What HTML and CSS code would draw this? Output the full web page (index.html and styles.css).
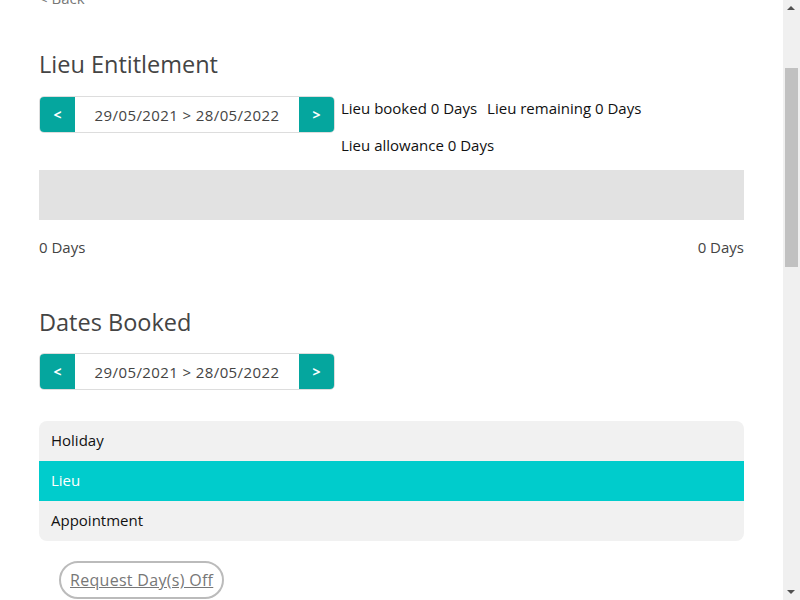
FILE: index.html
```html
<!DOCTYPE html>
<html lang="en">
<head>
<meta charset="utf-8">
<title>Lieu Entitlement</title>
<link rel="stylesheet" href="styles.css">
</head>
<body>
<div class="page">
  <a class="back" href="#">&lt; Back</a>

  <section class="entitlement">
    <h2 class="title">Lieu Entitlement</h2>
    <div class="picker-row">
      <div class="picker">
        <button class="nav">&lt;</button>
        <span class="range">29/05/2021 &gt; 28/05/2022</span>
        <button class="nav">&gt;</button>
      </div>
      <div class="stats">
        <span class="stat">Lieu booked 0 Days</span>
        <span class="stat">Lieu remaining 0 Days</span>
        <span class="stat">Lieu allowance 0 Days</span>
      </div>
    </div>
    <div class="bar"></div>
    <div class="scale"><span>0 Days</span><span>0 Days</span></div>
  </section>

  <section class="booked">
    <h2 class="title title-booked">Dates Booked</h2>
    <div class="picker">
      <button class="nav">&lt;</button>
      <span class="range">29/05/2021 &gt; 28/05/2022</span>
      <button class="nav">&gt;</button>
    </div>
    <ul class="types">
      <li class="type">Holiday</li>
      <li class="type active">Lieu</li>
      <li class="type">Appointment</li>
    </ul>
    <a class="request" href="#">Request Day(s) Off</a>
  </section>
</div>
<div class="scrollbar">
  <span class="arrow arrow-up"></span>
  <span class="thumb"></span>
  <span class="arrow arrow-down"></span>
</div>
<script>window.scrollTo(0, 154);</script>
</body>
</html>
```
FILE: styles.css
```css
html, body {
  margin: 0;
  padding: 0;
  background: #fff;
}
body {
  font-family: "Open Sans", "DejaVu Sans", sans-serif;
  font-size: 15px;
  color: #444;
}
.page {
  padding: 142px 56px 1000px 39px;
}
.back {
  display: block;
  line-height: 20px;
  color: #777;
  text-decoration: none;
}
.title {
  margin: 41px 0 17px;
  font-size: 23.5px;
  line-height: 30px;
  font-weight: 400;
  color: #444;
}
.title-booked {
  margin-top: 50px;
  margin-bottom: 16px;
}
.picker-row {
  display: flex;
  align-items: flex-start;
  gap: 6px;
}
.picker {
  display: flex;
  align-items: stretch;
  width: 296px;
  height: 37px;
  box-sizing: border-box;
  border: 1px solid #ddd;
  border-radius: 5px;
  overflow: hidden;
}
.nav {
  width: 35px;
  flex: none;
  border: 0;
  margin: -1px 0;
  background: #05a69e;
  color: #fff;
  font-family: inherit;
  font-weight: 700;
  font-size: 14px;
  padding: 0;
}
.range {
  flex: 1;
  display: flex;
  align-items: center;
  justify-content: center;
  color: #444;
  letter-spacing: 0.4px;
}
.stats {
  display: flex;
  flex-wrap: wrap;
  width: 330px;
  column-gap: 10px;
  row-gap: 12px;
  color: #111;
}
.stat {
  line-height: 25px;
}
.bar {
  margin-top: 12px;
  height: 50px;
  background: #e2e2e2;
}
.scale {
  display: flex;
  justify-content: space-between;
  margin-top: 17px;
  line-height: 20px;
}
.types {
  list-style: none;
  margin: 31px 0 0;
  padding: 0;
  border-radius: 8px;
  overflow: hidden;
  background: #f1f1f1;
}
.type {
  height: 40px;
  line-height: 39px;
  padding-left: 12px;
  color: #111;
}
.type.active {
  background: #00cccc;
  color: #fff;
}
.request {
  display: inline-block;
  margin: 20px 0 0 20px;
  height: 38px;
  line-height: 34px;
  box-sizing: border-box;
  padding: 0 9px;
  border: 2px solid #bbb;
  border-radius: 19px;
  color: #777;
  font-size: 16px;
  letter-spacing: 0.3px;
  text-decoration: underline;
}
.scrollbar {
  position: fixed;
  top: 0;
  right: 0;
  width: 17px;
  height: 100vh;
  background: #f0f0f0;
}
.thumb {
  position: absolute;
  left: 2px;
  top: 68px;
  width: 13px;
  height: 199px;
  background: #c1c1c1;
}
.arrow {
  position: absolute;
  left: 4px;
  width: 0;
  height: 0;
  border-left: 4px solid transparent;
  border-right: 4px solid transparent;
}
.arrow-up {
  top: 6px;
  border-bottom: 4px solid #505050;
}
.arrow-down {
  bottom: 6px;
  border-top: 4px solid #505050;
}
```
